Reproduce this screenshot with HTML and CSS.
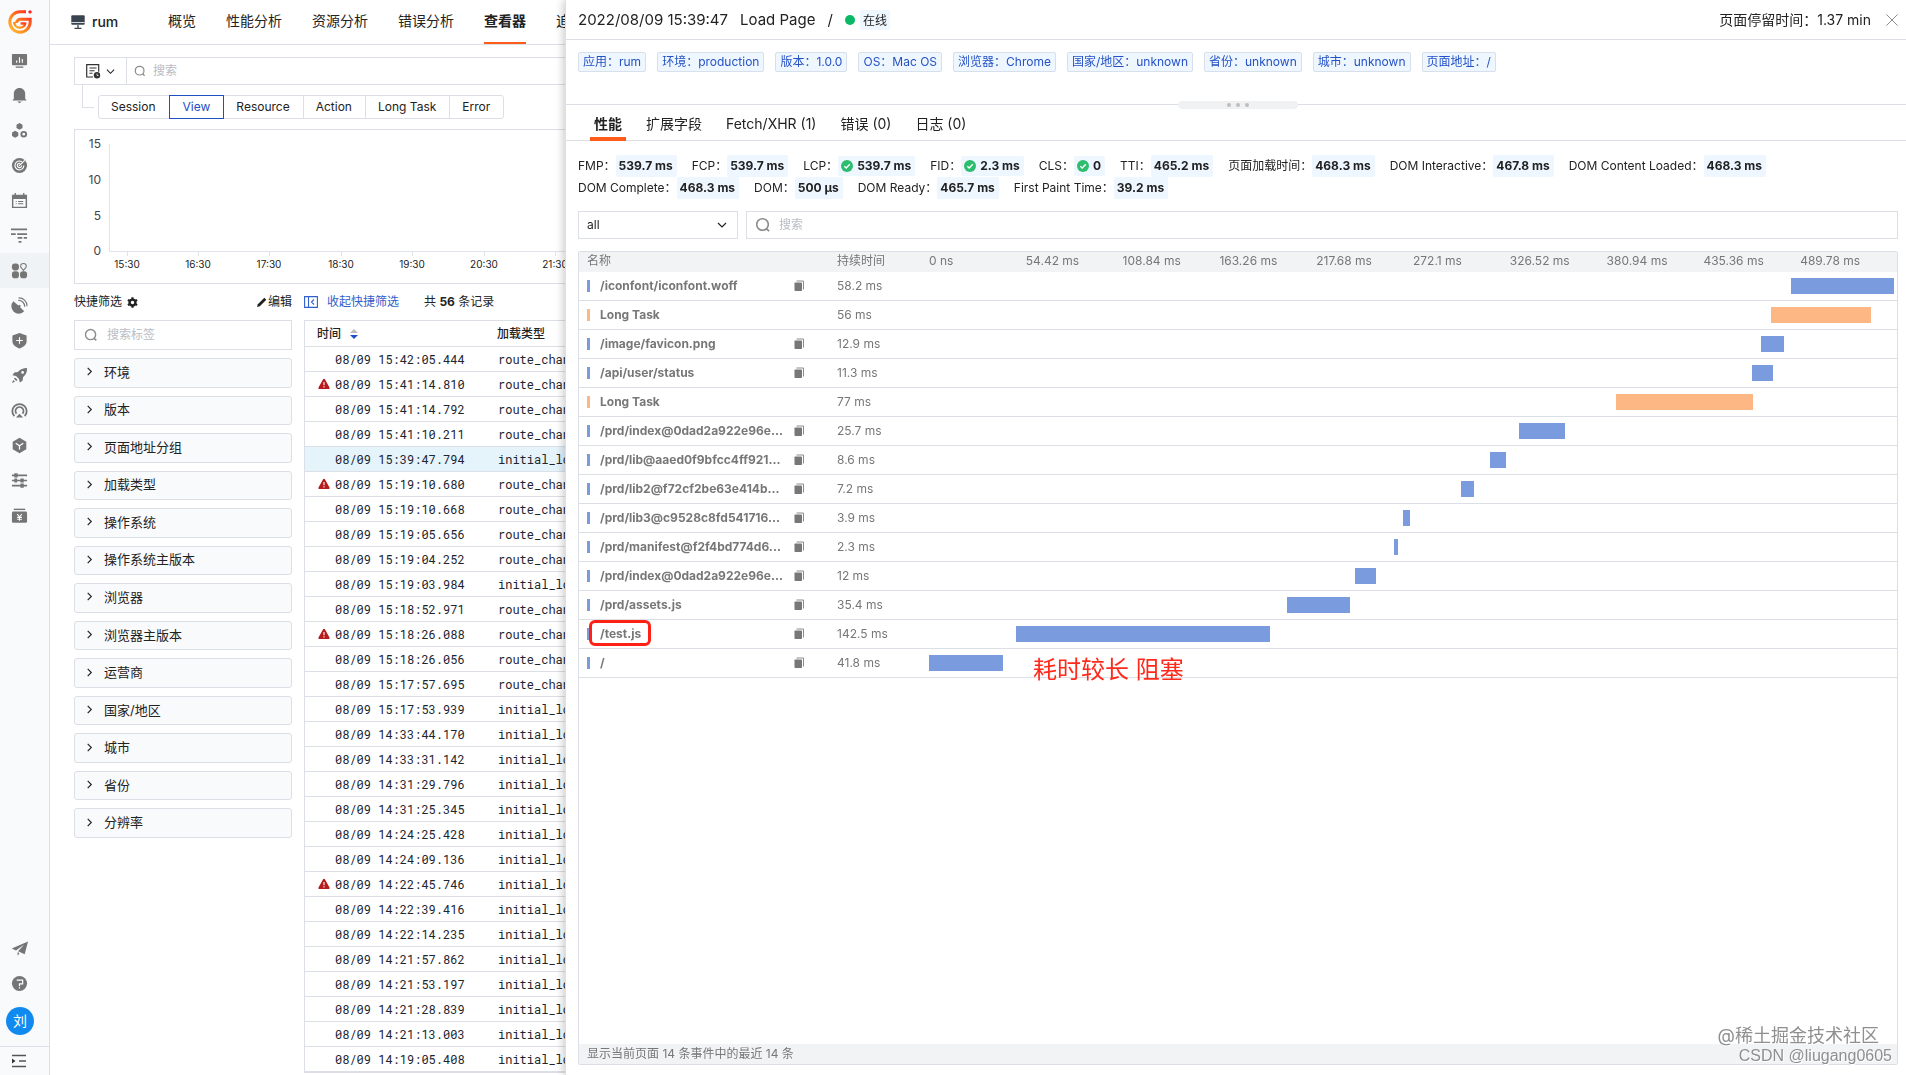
FILE: index.html
```html
<!DOCTYPE html>
<html lang="zh-CN">
<head>
<meta charset="utf-8">
<title>rum - 查看器</title>
<link rel="stylesheet" href="styles.css">
</head>
<body>
<svg class="sprite" aria-hidden="true">
  <symbol id="i-search" viewBox="0 0 16 16"><circle cx="7.5" cy="7.5" r="5.8" fill="none" stroke="currentColor" stroke-width="1.6"/><path d="M11.5 11.8l2.6 2.4" stroke="currentColor" stroke-width="1.8" fill="none"/></symbol>
  <symbol id="i-down" viewBox="0 0 10 10"><path d="M1 3l4 4 4-4" fill="none" stroke="currentColor" stroke-width="1.2"/></symbol>
  <symbol id="i-right" viewBox="0 0 10 10"><path d="M3 1l4 4-4 4" fill="none" stroke="currentColor" stroke-width="1.3"/></symbol>
  <symbol id="i-warn" viewBox="0 0 12 12"><path d="M6 .8c.4 0 .7.2.9.5l4.6 8.2c.4.8-.1 1.6-.9 1.6H1.400c-.8 0-1.300-.8-.9-1.600L5.100 1.300c.2-.3.5-.5.9-.5z" fill="#b71c1c"/><path d="M6 4v3.200M6 8.300v1.300" stroke="#fff" stroke-width="1.100"/></symbol>
  <symbol id="i-copy" viewBox="0 0 10 12"><path d="M2.500 1h7v8.500" fill="none" stroke="#8c8c8c" stroke-width="1"/><rect x="0.500" y="2.500" width="7.500" height="8.500" rx=".8" fill="#777"/></symbol>
  <symbol id="i-ok" viewBox="0 0 12 12"><circle cx="6" cy="6" r="6" fill="#2dbd6e"/><path d="M3.300 6.200l1.900 1.800 3.600-3.800" fill="none" stroke="#fff" stroke-width="1.400"/></symbol>
</svg>
<div class="app">
  <nav class="rail" aria-label="主导航">
    <a class="logo" href="#" aria-label="首页"><svg width="24" height="24" viewBox="0 0 24 24"><defs><linearGradient id="lg" x1="0" y1="1" x2="1" y2="0"><stop offset="0" stop-color="#ffc22e"/><stop offset=".5" stop-color="#ff7a1e"/><stop offset="1" stop-color="#ff2222"/></linearGradient></defs><g fill="none" stroke="url(#lg)"><path d="M18 1.800H12A10.200 10.200 0 1 0 22.200 12V9.300H12.500A3.800 3.800 0 0 0 8.500 13" stroke-width="3"/><path d="M17 13.500H12.500M17.300 12.500c0 3-2 5.200-5.300 5.200-3.300 0-5.800-2.500-5.800-5.700" stroke-width="2.400"/></g><circle cx="22" cy="1.900" r="1.700" fill="#f22"/></svg></a>
    <a class="rail-item" href="#" aria-label="仪表板"><svg viewBox="0 0 18 18"><rect x="1" y="2" width="16" height="12" rx="1" fill="currentColor"/><path d="M6 11.500V9M9 11.500V5.500M12 11.500V7.500" stroke="#fff" stroke-width="1.200"/><path d="M5 16h8" stroke="currentColor" stroke-width="1.400"/></svg></a>
    <a class="rail-item" href="#" aria-label="事件"><svg viewBox="0 0 18 18"><path d="M9 1c3.600 0 6 2.600 6 6v5.500l1.600 1.800H1.400L3 12.500V7c0-3.400 2.400-6 6-6zM6.500 15.300h5L9 17.200z" fill="currentColor"/></svg></a>
    <a class="rail-item" href="#" aria-label="基础设施"><svg viewBox="0 0 18 18"><path d="M9 1l3.200 1.800v3.500L9 8.200 5.800 6.300V2.800zM4.400 9.200l3.300 1.900v3.600l-3.300 1.900-3.300-1.900v-3.600z" fill="currentColor"/><circle cx="13.500" cy="12.900" r="2.500" fill="none" stroke="currentColor" stroke-width="2"/></svg></a>
    <a class="rail-item" href="#" aria-label="指标"><svg viewBox="0 0 18 18"><circle cx="9" cy="9" r="8" fill="currentColor"/><path d="M11.500 5A4.700 4.700 0 1 0 13.600 9M8.500 9.500l6-6M9.800 6.800A2.300 2.300 0 1 0 11.300 9" fill="none" stroke="#fff" stroke-width="1.200"/></svg></a>
    <a class="rail-item" href="#" aria-label="日志"><svg viewBox="0 0 18 18"><path d="M1 3h16v14H1zM2.500 7.500v8h13v-8z" fill="currentColor" fill-rule="evenodd"/><path d="M4.500 1v3M13.500 1v3" stroke="currentColor" stroke-width="1.400"/><path d="M5 10h1M7.500 10h5.500M5 12.500h1M7.500 12.500h5.500" stroke="currentColor" stroke-width="1.200"/></svg></a>
    <a class="rail-item" href="#" aria-label="应用性能"><svg viewBox="0 0 18 18"><path d="M0 2.500h17M0 7.500h5M6.500 7.500H17M7 11.500h5M13.500 11.500H17M8 15.800h3" stroke="currentColor" stroke-width="1.900" fill="none"/></svg></a>
    <a class="rail-item active" href="#" aria-label="用户访问监测"><svg viewBox="0 0 18 18"><rect x="1" y="1.500" width="7.400" height="7.400" rx="3" fill="currentColor"/><rect x="1" y="9.800" width="7.400" height="7.400" rx="3" fill="currentColor"/><rect x="9.600" y="9.800" width="7.400" height="7.400" rx="3" fill="currentColor"/><path d="M13.200 1.500c1.900 0 3 1.300 3 3 0 1.800-2 2.800-3 4.400-1-1.600-3-2.600-3-4.400 0-1.700 1.100-3 3-3z" fill="none" stroke="currentColor" stroke-width="1.100"/></svg></a>
    <a class="rail-item" href="#" aria-label="可用性监测"><svg viewBox="0 0 18 18"><path d="M2.500 4.500a7.800 7.800 0 0 0 11.500 10.700L9.500 10.600l1-1-1.400-1.400-1.300.8z" fill="currentColor"/><path d="M7.500 3.500c4-.2 7 2.700 7 6.700M8 1c5-.2 9 3.500 9 8.800" fill="none" stroke="currentColor" stroke-width="1.200"/></svg></a>
    <a class="rail-item" href="#" aria-label="安全巡检"><svg viewBox="0 0 18 18"><path d="M9 1l7.500 2.800V10c0 3.600-3.500 5.800-7.500 7.500C5 15.800 1.500 13.600 1.500 10V3.800z" fill="currentColor"/><path d="M9 5.500v7M5.500 9h7" stroke="#fff" stroke-width="1.200"/></svg></a>
    <a class="rail-item" href="#" aria-label="快速开始"><svg viewBox="0 0 18 18"><path d="M17 1c.2 4-1.200 7.300-4.300 9.800l-.4 3.700-3 2-.8-3.800-3.200-3.200-3.800-.7 2-3 3.700-.5C9.700 2.200 13 1 17 1zM4.200 11l2.800 2.800-1.500 1-2.300-2.300zM2.300 13.700l2 2L1 17z" fill="currentColor"/><circle cx="12.300" cy="5.700" r="1.400" fill="#fff"/></svg></a>
    <a class="rail-item" href="#" aria-label="网络"><svg viewBox="0 0 18 18"><path d="M3.500 15A7.600 7.600 0 1 1 14.500 15M5.800 12.300a4.200 4.200 0 1 1 6.400 0" fill="none" stroke="currentColor" stroke-width="1.900"/><path d="M9 12.500l3.800 4H5.200z" fill="currentColor"/></svg></a>
    <a class="rail-item" href="#" aria-label="集成"><svg viewBox="0 0 18 18"><path d="M9 .8l7.200 4.100v8.200L9 17.200l-7.200-4.100V4.900z" fill="currentColor"/><path d="M5 6.500l4 2.800 4-2.800M9 9.300v4" fill="none" stroke="#fff" stroke-width="1.300"/></svg></a>
    <a class="rail-item" href="#" aria-label="管理"><svg viewBox="0 0 18 18"><path d="M1 3.500h16M1 9h16M1 14.500h16" stroke="currentColor" stroke-width="1.800"/><path d="M3.500 1.300h3.500v4.400H3.500zM10 6.800h3.500v4.400H10zM10 12.300h3.500v4.400H10zM3.500 7h3v4h-3z" fill="currentColor"/></svg></a>
    <a class="rail-item" href="#" aria-label="付费计划"><svg viewBox="0 0 18 18"><path d="M3 2.500h12" stroke="currentColor" stroke-width="1.500"/><rect x="1" y="4.800" width="16" height="12" rx="1.500" fill="currentColor"/><path d="M6.500 7.500L9 10.300l2.500-2.800M9 10.300V14.500M6.500 11h5M6.500 12.900h5" fill="none" stroke="#fff" stroke-width="1.100"/></svg></a>
    <div class="rail-foot">
      <a class="rail-item" href="#" aria-label="邀请"><svg viewBox="0 0 18 18"><path d="M18 1.500L.8 9l4.500 2L14 4.800 7.500 12l7 3zM7 12.800v3.800l2-2.700z" fill="currentColor"/></svg></a>
      <a class="rail-item" href="#" aria-label="帮助"><svg viewBox="0 0 18 18"><circle cx="9" cy="9" r="8" fill="currentColor"/><path d="M6 5.500h6.300v4H9v2.300M9 13v1.300" fill="none" stroke="#fff" stroke-width="1.300"/></svg></a>
      <a class="avatar" href="#">刘</a>
      <button class="fold" aria-label="展开菜单"><svg width="16" height="16" viewBox="0 0 16 16"><path d="M1 2.500h14M8 8h7M1 13.500h14" stroke="#555" stroke-width="1.300"/><path d="M1 5.500L4.500 8 1 10.500z" fill="#333"/></svg></button>
    </div>
  </nav>

  <main class="main">
    <header class="topbar">
      <a class="brand" href="#"><svg width="14" height="14" viewBox="0 0 14 14"><rect x=".3" y=".3" width="13.400" height="9.500" rx="1" fill="#3a4450"/><path d="M.3 7.500h13.400" stroke="#fff" stroke-width=".8"/><path d="M7 10v3M3.500 13.300h7" stroke="#3a4450" stroke-width="1.300"/></svg>rum</a>
      <nav class="top-tabs">
        <a href="#">概览</a><a href="#">性能分析</a><a href="#">资源分析</a><a href="#">错误分析</a><a class="on" href="#">查看器</a><a href="#">追踪</a>
      </nav>
    </header>

    <div class="content">
      <div class="searchbar">
        <button class="kind" aria-label="查询历史"><svg width="16" height="16" viewBox="0 0 16 16"><path d="M8 14H1.700V1.700h12v7" fill="none" stroke="#333" stroke-width="1.200"/><path d="M4.500 5h7M4.500 7.700h5M4.500 10.300h3" stroke="#333" stroke-width="1.100"/><circle cx="12" cy="12.200" r="3.200" fill="#333"/><path d="M12 10.500v2h1.500" stroke="#fff" fill="none" stroke-width=".7"/></svg><svg width="9" height="9"><use href="#i-down"/></svg></button>
        <svg class="grey" width="12" height="12"><use href="#i-search"/></svg>
        <input type="text" placeholder="搜索" aria-label="搜索">
      </div>
      <div class="kinds">
        <span class="elbow"></span>
        <div class="segment"><button>Session</button><button class="on">View</button><button>Resource</button><button>Action</button><button>Long Task</button><button>Error</button></div>
      </div>

      <div class="chart">
        <svg width="100%" height="153" role="img" aria-label="View 数量趋势">
          <path d="M34.500 14v107.500H1800M52.500 122v4M123.500 122v4M194.500 122v4M266.500 122v4M337.500 122v4M409.500 122v4M480.500 122v4" fill="none" stroke="#e0e3ea"/>
          <g class="ylab"><text x="26" y="18">15</text><text x="26" y="54">10</text><text x="26" y="90">5</text><text x="26" y="125">0</text></g>
          <g class="xlab"><text x="52" y="138">15:30</text><text x="123" y="138">16:30</text><text x="194" y="138">17:30</text><text x="266" y="138">18:30</text><text x="337" y="138">19:30</text><text x="409" y="138">20:30</text><text x="480" y="138">21:30</text></g>
        </svg>
      </div>

      <div class="explorer">
        <aside class="filters">
          <div class="line"><span class="lab">快捷筛选</span><svg width="11" height="11" viewBox="0 0 12 12"><circle cx="6" cy="6" r="3.200" fill="none" stroke="#222" stroke-width="2.600"/><path d="M6 .2v2M6 9.800v2M1 3.100l1.700 1M9.300 7.900l1.700 1M11 3.100l-1.700 1M2.700 7.900l-1.700 1" stroke="#222" stroke-width="2.400"/></svg><button class="edit"><svg width="10" height="10" viewBox="0 0 10 10"><path d="M0 10l.8-2.800L7.300.7l2 2L2.800 9.200z" fill="#222"/></svg>编辑</button></div>
          <div class="tagsearch"><svg class="grey" width="14" height="14"><use href="#i-search"/></svg><input type="text" placeholder="搜索标签" aria-label="搜索标签"></div>
          <div class="facets">
            <button><svg><use href="#i-right"/></svg>环境</button>
            <button><svg><use href="#i-right"/></svg>版本</button>
            <button><svg><use href="#i-right"/></svg>页面地址分组</button>
            <button><svg><use href="#i-right"/></svg>加载类型</button>
            <button><svg><use href="#i-right"/></svg>操作系统</button>
            <button><svg><use href="#i-right"/></svg>操作系统主版本</button>
            <button><svg><use href="#i-right"/></svg>浏览器</button>
            <button><svg><use href="#i-right"/></svg>浏览器主版本</button>
            <button><svg><use href="#i-right"/></svg>运营商</button>
            <button><svg><use href="#i-right"/></svg>国家/地区</button>
            <button><svg><use href="#i-right"/></svg>城市</button>
            <button><svg><use href="#i-right"/></svg>省份</button>
            <button><svg><use href="#i-right"/></svg>分辨率</button>
          </div>
        </aside>
        <section class="records">
          <div class="line"><button class="collapse"><svg width="14" height="12" viewBox="0 0 14 12"><path d="M.6.600h12.800v10.800H.6zM4.500.600v10.800M10 3.500L7.500 6l2.500 2.500" fill="none" stroke="#2f61cc" stroke-width="1.100"/></svg>收起快捷筛选</button><span>共 <b>56</b> 条记录</span></div>
          <table class="views">
            <thead><tr><th class="c-time"><span>时间<svg width="8" height="10" viewBox="0 0 8 10"><path d="M4 0l4 4H0z" fill="#bbb"/><path d="M4 10L0 6h8z" fill="#1f4fc4"/></svg></span></th><th>加载类型</th></tr></thead>
            <tbody>
              <tr><td>08/09 15:42:05.444</td><td>route_change</td></tr>
              <tr><td><svg><use href="#i-warn"/></svg>08/09 15:41:14.810</td><td>route_change</td></tr>
              <tr><td>08/09 15:41:14.792</td><td>route_change</td></tr>
              <tr><td>08/09 15:41:10.211</td><td>route_change</td></tr>
              <tr class="sel"><td>08/09 15:39:47.794</td><td>initial_load</td></tr>
              <tr><td><svg><use href="#i-warn"/></svg>08/09 15:19:10.680</td><td>route_change</td></tr>
              <tr><td>08/09 15:19:10.668</td><td>route_change</td></tr>
              <tr><td>08/09 15:19:05.656</td><td>route_change</td></tr>
              <tr><td>08/09 15:19:04.252</td><td>route_change</td></tr>
              <tr><td>08/09 15:19:03.984</td><td>initial_load</td></tr>
              <tr><td>08/09 15:18:52.971</td><td>route_change</td></tr>
              <tr><td><svg><use href="#i-warn"/></svg>08/09 15:18:26.088</td><td>route_change</td></tr>
              <tr><td>08/09 15:18:26.056</td><td>route_change</td></tr>
              <tr><td>08/09 15:17:57.695</td><td>route_change</td></tr>
              <tr><td>08/09 15:17:53.939</td><td>initial_load</td></tr>
              <tr><td>08/09 14:33:44.170</td><td>initial_load</td></tr>
              <tr><td>08/09 14:33:31.142</td><td>initial_load</td></tr>
              <tr><td>08/09 14:31:29.796</td><td>initial_load</td></tr>
              <tr><td>08/09 14:31:25.345</td><td>initial_load</td></tr>
              <tr><td>08/09 14:24:25.428</td><td>initial_load</td></tr>
              <tr><td>08/09 14:24:09.136</td><td>initial_load</td></tr>
              <tr><td><svg><use href="#i-warn"/></svg>08/09 14:22:45.746</td><td>initial_load</td></tr>
              <tr><td>08/09 14:22:39.416</td><td>initial_load</td></tr>
              <tr><td>08/09 14:22:14.235</td><td>initial_load</td></tr>
              <tr><td>08/09 14:21:57.862</td><td>initial_load</td></tr>
              <tr><td>08/09 14:21:53.197</td><td>initial_load</td></tr>
              <tr><td>08/09 14:21:28.839</td><td>initial_load</td></tr>
              <tr><td>08/09 14:21:13.003</td><td>initial_load</td></tr>
              <tr><td>08/09 14:19:05.408</td><td>initial_load</td></tr>
            </tbody>
          </table>
        </section>
      </div>
    </div>
  </main>
</div>

<section class="drawer" role="dialog" aria-label="View 详情">
  <header class="d-head">
    <span>2022/08/09 15:39:47</span><span>Load Page</span><span>/</span>
    <span class="state"><i class="dot"></i><em>在线</em></span>
    <span class="stay">页面停留时间：1.37 min</span>
    <button class="close" aria-label="关闭"><svg width="12" height="12" viewBox="0 0 12 12"><path d="M.5.500l11 11M11.500.500l-11 11" stroke="#8c8c8c" stroke-width="1"/></svg></button>
  </header>
  <div class="tags">
    <span>应用：rum</span><span>环境：production</span><span>版本：1.0.0</span><span>OS：Mac OS</span><span>浏览器：Chrome</span><span>国家/地区：unknown</span><span>省份：unknown</span><span>城市：unknown</span><span>页面地址：/</span>
  </div>
  <div class="splitter"><span class="grip"><i></i><i></i><i></i></span></div>
  <nav class="d-tabs"><a class="on" href="#">性能</a><a href="#">扩展字段</a><a href="#">Fetch/XHR (1)</a><a href="#">错误 (0)</a><a href="#">日志 (0)</a></nav>

  <div class="d-body">
    <div class="metrics">
      <span>FMP：<b>539.7 ms</b></span>
      <span>FCP：<b>539.7 ms</b></span>
      <span>LCP：<b class="good"><svg><use href="#i-ok"/></svg>539.7 ms</b></span>
      <span>FID：<b class="good"><svg><use href="#i-ok"/></svg>2.3 ms</b></span>
      <span>CLS：<b class="good"><svg><use href="#i-ok"/></svg>0</b></span>
      <span>TTI：<b>465.2 ms</b></span>
      <span>页面加载时间：<b>468.3 ms</b></span>
      <span>DOM Interactive：<b>467.8 ms</b></span>
      <span>DOM Content Loaded：<b>468.3 ms</b></span>
      <span>DOM Complete：<b>468.3 ms</b></span>
      <span>DOM：<b>500 µs</b></span>
      <span>DOM Ready：<b>465.7 ms</b></span>
      <span>First Paint Time：<b>39.2 ms</b></span>
    </div>
    <div class="query">
      <div class="pick"><select aria-label="类型"><option>all</option></select><svg width="10" height="10"><use href="#i-down"/></svg></div>
      <div class="find"><svg class="grey" width="16" height="16"><use href="#i-search"/></svg><input type="text" placeholder="搜索" aria-label="搜索资源"></div>
    </div>
    <div class="waterfall">
      <table>
        <colgroup><col class="w-name"><col class="w-time"><col></colgroup>
        <thead><tr><th>名称</th><th>持续时间</th><th class="track"><div class="ticks"><span>0 ns</span><span>54.42 ms</span><span>108.84 ms</span><span>163.26 ms</span><span>217.68 ms</span><span>272.1 ms</span><span>326.52 ms</span><span>380.94 ms</span><span>435.36 ms</span><span>489.78 ms</span></div></th></tr></thead>
        <tbody>
          <tr><td><div class="res"><b>/iconfont/iconfont.woff</b><svg><use href="#i-copy"/></svg></div></td><td>58.2 ms</td><td class="track"><div class="bar" style="margin-left:89.05%;width:10.69%"></div></td></tr>
          <tr class="task"><td><div class="res"><b>Long Task</b></div></td><td>56 ms</td><td class="track"><div class="bar" style="margin-left:87%;width:10.29%"></div></td></tr>
          <tr><td><div class="res"><b>/image/favicon.png</b><svg><use href="#i-copy"/></svg></div></td><td>12.9 ms</td><td class="track"><div class="bar" style="margin-left:86%;width:2.37%"></div></td></tr>
          <tr><td><div class="res"><b>/api/user/status</b><svg><use href="#i-copy"/></svg></div></td><td>11.3 ms</td><td class="track"><div class="bar" style="margin-left:85.06%;width:2.08%"></div></td></tr>
          <tr class="task"><td><div class="res"><b>Long Task</b></div></td><td>77 ms</td><td class="track"><div class="bar" style="margin-left:70.97%;width:14.15%"></div></td></tr>
          <tr><td><div class="res"><b>/prd/index@0dad2a922e96e...</b><svg><use href="#i-copy"/></svg></div></td><td>25.7 ms</td><td class="track"><div class="bar" style="margin-left:60.95%;width:4.72%"></div></td></tr>
          <tr><td><div class="res"><b>/prd/lib@aaed0f9bfcc4ff921...</b><svg><use href="#i-copy"/></svg></div></td><td>8.6 ms</td><td class="track"><div class="bar" style="margin-left:57.95%;width:1.65%"></div></td></tr>
          <tr><td><div class="res"><b>/prd/lib2@f72cf2be63e414b...</b><svg><use href="#i-copy"/></svg></div></td><td>7.2 ms</td><td class="track"><div class="bar" style="margin-left:54.96%;width:1.32%"></div></td></tr>
          <tr><td><div class="res"><b>/prd/lib3@c9528c8fd541716...</b><svg><use href="#i-copy"/></svg></div></td><td>3.9 ms</td><td class="track"><div class="bar" style="margin-left:48.97%;width:.72%"></div></td></tr>
          <tr><td><div class="res"><b>/prd/manifest@f2f4bd774d6...</b><svg><use href="#i-copy"/></svg></div></td><td>2.3 ms</td><td class="track"><div class="bar" style="margin-left:48.04%;width:.42%"></div></td></tr>
          <tr><td><div class="res"><b>/prd/index@0dad2a922e96e...</b><svg><use href="#i-copy"/></svg></div></td><td>12 ms</td><td class="track"><div class="bar" style="margin-left:44.01%;width:2.2%"></div></td></tr>
          <tr><td><div class="res"><b>/prd/assets.js</b><svg><use href="#i-copy"/></svg></div></td><td>35.4 ms</td><td class="track"><div class="bar" style="margin-left:37%;width:6.5%"></div></td></tr>
          <tr><td><div class="res marked"><b>/test.js</b><svg><use href="#i-copy"/></svg></div></td><td>142.5 ms</td><td class="track"><div class="bar" style="margin-left:8.99%;width:26.19%"></div></td></tr>
          <tr><td><div class="res"><b>/</b><svg><use href="#i-copy"/></svg></div></td><td>41.8 ms</td><td class="track"><div class="bar" style="margin-left:0%;width:7.68%"></div><span class="remark">耗时较长 阻塞</span></td></tr>
        </tbody>
      </table>
      <footer>显示当前页面 14 条事件中的最近 14 条</footer>
    </div>
  </div>
  <div class="watermark"><span class="w-a">@稀土掘金技术社区</span><span class="w-b">CSDN @liugang0605</span></div>
</section>
</body>
</html>
```
FILE: styles.css
```css
*, *::before, *::after { box-sizing: border-box; }
body {
  margin: 0;
  font: 12px/20px Inter, "Noto Sans CJK SC", sans-serif;
  color: #222;
  background: #fff;
  overflow: hidden;
}
a { color: inherit; text-decoration: none; }
button, input, select { font: inherit; color: inherit; margin: 0; padding: 0; border: 0; background: none; outline: 0; }
input::placeholder { color: #b8bcc4; opacity: 1; }
svg { flex: none; display: block; }
table { border-collapse: separate; border-spacing: 0; width: 100%; }
th { text-align: left; }
.sprite { position: absolute; width: 0; height: 0; }
.grey { color: #8c8c8c; }

.app { display: flex; height: 100vh; overflow: hidden; }

/* icon rail */
.rail { flex: none; width: 50px; display: flex; flex-direction: column; background: #f9fafc; border-right: 1px solid #dcdfe6; color: #757575; }
.logo { height: 43px; padding: 10px 0 0 8px; }
.rail-item { height: 35px; display: flex; align-items: center; padding-left: 11px; }
.rail-item svg { width: 17px; height: 17px; }
.rail-item.active { background: #f0f3f6; }
.rail-foot { margin-top: auto; display: flex; flex-direction: column; }
.avatar { width: 28px; height: 28px; margin: 6px 0 11px 6px; border-radius: 50%; background: #118af0; color: #fff; font-size: 14px; line-height: 28px; text-align: center; }
.fold { height: 29px; padding-left: 11px; border-top: 1px solid #dcdfe6; display: flex; align-items: center; }

/* top bar */
.main { flex: 1; min-width: 0; display: flex; flex-direction: column; }
.topbar { height: 45px; display: flex; padding-left: 21px; border-bottom: 1px solid #dcdfe6; font-size: 14px; line-height: 42px; }
.brand { width: 97px; display: flex; align-items: center; gap: 7px; font-weight: 500; }
.top-tabs { display: flex; gap: 30px; }
.top-tabs a { height: 44px; }
.top-tabs .on { font-weight: 700; border-bottom: 2px solid #ff5b1a; }

.content { padding: 12px 16px 0 24px; }
.searchbar { height: 28px; display: flex; align-items: center; border: 1px solid #dcdfe6; }
.searchbar input { flex: 1; padding-left: 7px; }
.kind { width: 52px; height: 26px; margin-right: 7px; padding-left: 10px; display: flex; align-items: center; gap: 5px; border-right: 1px solid #dcdfe6; }
.kinds { display: flex; padding-left: 8px; gap: 4px; }
.elbow { width: 12px; height: 23px; border: solid #dcdfe6; border-width: 0 0 1px 1px; }
.segment { display: flex; height: 24px; margin-top: 10px; border: 1px solid #dcdfe6; border-radius: 3px; }
.segment button { height: 22px; padding: 0 13px 0 12px; line-height: 22px; border-left: 1px solid #dcdfe6; }
.segment button:first-child { border-left: 0; }
.segment .on { height: 24px; margin-top: -1px; padding: 0 13px; border: 1px solid #1f4fc4; color: #1f4fc4; }
.segment .on + button { border-left: 0; }

.chart { margin-top: 10px; height: 155px; border: 1px solid #dcdfe6; overflow: hidden; }
.ylab { font-size: 12px; fill: #444; text-anchor: end; }
.xlab { font-size: 10px; fill: #222; text-anchor: middle; }

/* filters and records */
.explorer { display: flex; gap: 12px; }
.filters { width: 218px; flex: none; }
.line { height: 36px; display: flex; align-items: center; }
.line .lab { margin-right: 5px; }
.edit { margin-left: auto; display: flex; align-items: center; gap: 1px; }
.tagsearch { height: 30px; border: 1px solid #dcdfe6; display: flex; align-items: center; padding-left: 9px; gap: 9px; }
.tagsearch input { width: 160px; }
.facets { margin-top: 8px; height: 480px; display: grid; grid-auto-rows: 1fr; gap: 8px; }
.facets button { display: flex; align-items: center; gap: 10px; padding: 0 0 2px 10px; font-size: 13px; border: 1px solid #dcdfe6; border-radius: 3px; background: #f9fafc; }
.facets svg { width: 9px; height: 9px; }
.records { flex: 1; min-width: 0; }
.collapse { display: flex; align-items: center; gap: 9px; margin-right: 25px; color: #2f61cc; }
.views { border: 1px solid #dcdfe6; table-layout: fixed; }
.views th { height: 26px; padding: 0 0 0 12px; border-bottom: 1px solid #dcdfe6; font-weight: 500; }
.views .c-time { width: 180px; }
.views th span { display: flex; align-items: center; gap: 9px; }
.views td { height: 25px; padding: 0 0 0 13px; border-bottom: 1px solid #dcdfe6; font: 12px/24px "Roboto Mono", "Liberation Mono", monospace; color: #1c2530; position: relative; }
.views td:first-child { padding-left: 30px; }
.views td svg { position: absolute; left: 13px; top: 6px; width: 12px; height: 12px; }
.views .sel td { background: #e5f3fb; }

/* detail drawer */
.drawer { position: fixed; inset: 0 0 0 565px; display: flex; flex-direction: column; background: #fff; border-left: 1px solid #dcdfe6; box-shadow: -2px 0 8px rgba(0, 0, 0, .2); }
.d-head { height: 40px; flex: none; display: flex; align-items: center; gap: 12px; padding: 0 8px 0 12px; border-bottom: 1px solid #dcdfe6; font-size: 15px; line-height: 22px; }
.state { display: flex; align-items: center; gap: 5px; font-size: 12px; }
.dot { width: 10px; height: 10px; border-radius: 50%; background: #0bb866; }
.state em { font-style: normal; height: 20px; padding: 0 3px; border-radius: 2px; background: #eef6ff; }
.stay { margin-left: auto; font-size: 14px; }
.close { margin-left: 3px; }
.tags { display: flex; flex-wrap: wrap; gap: 11px; padding: 12px 12px 32px; }
.tags span { height: 20px; padding: 0 4px; line-height: 18px; border: 1px solid #d6dfea; border-radius: 2px; background: #eef6ff; color: #2452c5; }
.splitter { height: 1px; background: #dcdfe6; display: flex; justify-content: center; align-items: center; }
.grip { flex: none; width: 120px; height: 8px; margin-left: 4px; border-radius: 4px; background: #f0f1f3; display: flex; justify-content: center; align-items: center; gap: 5px; }
.grip i { width: 4px; height: 4px; border-radius: 50%; background: #bfbfbf; }
.d-tabs { display: flex; flex: none; gap: 16px; height: 36px; padding-left: 24px; border-bottom: 1px solid #dcdfe6; font-size: 14px; line-height: 38px; }
.d-tabs a { padding: 0 4px; height: 36px; }
.d-tabs .on { font-weight: 700; border-bottom: 4px solid #ff5b1a; }

.d-body { flex: 1; min-height: 0; display: flex; flex-direction: column; padding: 14px 8px 10px 12px; }
.metrics { display: flex; flex-wrap: wrap; column-gap: 15px; line-height: 22px; }
.metrics span { display: flex; align-items: center; }
.metrics b { padding: 0 4px 0 3px; font-weight: 700; background: #eef6ff; border-radius: 2px; }
.metrics .good { display: flex; align-items: center; gap: 4px; line-height: 20px; }
.metrics svg { width: 12px; height: 12px; }
.query { display: flex; gap: 8px; margin: 12px 0; }
.pick, .find { height: 28px; border: 1px solid #dcdfe6; display: flex; align-items: center; }
.pick { width: 160px; padding-right: 10px; }
.pick select { flex: 1; appearance: none; padding-left: 8px; }
.find { flex: 1; padding-left: 8px; gap: 8px; }
.find input { flex: 1; }

.waterfall { flex: 1; display: flex; flex-direction: column; border: 1px solid #dcdfe6; border-radius: 2px; color: #777; }
.waterfall table { table-layout: fixed; }
.w-name { width: 250px; }
.w-time { width: 100px; }
.waterfall th { height: 20px; padding: 0 0 2px 8px; background: #f2f3f5; font-weight: 400; line-height: 18px; }
.waterfall td { height: 29px; padding: 0 0 0 8px; border-bottom: 1px solid #dcdfe6; position: relative; }
.waterfall td.track { padding: 0; }
.waterfall th.track { padding-left: 0; }
.ticks { display: grid; grid-template-columns: repeat(10, 1fr); }
.res { display: flex; align-items: center; }
.res::before { content: ""; flex: none; width: 3px; height: 12px; margin-right: 10px; background: #7b9bdf; }
.task .res::before { background: #fcb785; }
.res b { width: 186px; margin-right: 8px; font-weight: 700; overflow: hidden; white-space: nowrap; text-overflow: ellipsis; }
.res svg { width: 10px; height: 12px; }
.bar { height: 16px; background: #7b9bdf; }
.task .bar { background: #fcb785; }
.marked::after { content: ""; position: absolute; left: 10px; top: 0; width: 62px; height: 26px; border: 3px solid #ff2115; border-radius: 6px; }
.remark { position: absolute; left: 104px; top: 7px; font-size: 24px; line-height: 28px; color: #ff2a1c; }
.waterfall footer { margin-top: auto; padding-left: 8px; background: #f2f3f5; line-height: 20px; }

.watermark { position: absolute; right: 14px; bottom: 9px; display: flex; flex-direction: column; align-items: flex-end; color: #8f8f8f; text-shadow: 1px 1px 0 #fff; }
.w-a { font-size: 18px; margin-right: 13px; }
.w-b { font-size: 16px; font-family: "Liberation Sans", sans-serif; }
```
